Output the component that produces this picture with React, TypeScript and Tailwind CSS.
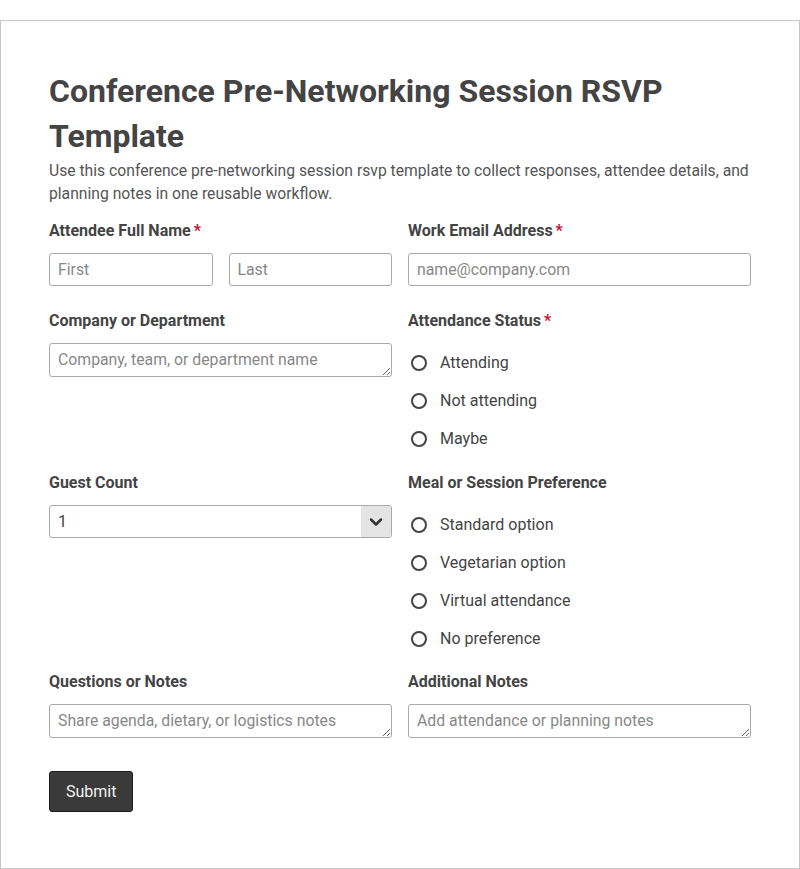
import { ChevronDown } from 'lucide-react';

const Label = ({ text, required }: { text: string; required?: boolean }) => (
    <div className="text-[16px] leading-[22px] font-bold text-[#444] mb-[11px]">
        {text}
        {required && <span className="text-[#c8102e] ml-[3px]">*</span>}
    </div>
);

const inputCls =
    'w-full h-[33px] border border-[#aaa] rounded-[3px] px-[8px] text-[15.8px] text-[#444] placeholder:text-[#888] bg-white outline-none';

const textareaCls =
    'block w-full h-[34px] border border-[#aaa] rounded-[3px] px-[8px] py-[5px] text-[15.8px] leading-[22px] text-[#444] placeholder:text-[#888] bg-white outline-none resize-y';

const RadioGroup = ({ name, options }: { name: string; options: string[] }) => (
    <div className="flex flex-col gap-[14px] pt-[8px]">
        {options.map((opt) => (
            <label key={opt} className="flex items-center h-[24px] text-[16px] text-[#444]">
                <input type="radio" name={name} className="appearance-none w-[16px] h-[16px] rounded-full border-2 border-[#444] ml-[3px] mr-[13px] shrink-0" />
                {opt}
            </label>
        ))}
    </div>
);

const App = () => {
    return (
        <div className="bg-white min-h-[869px] pt-[20px]" style={{ fontFamily: 'Roboto, "Noto Sans", sans-serif' }}>
            <div className="border border-[#c8c8c8] px-[48px] pt-[48px] pb-[56px]">
                <h1 className="text-[32px] leading-[45px] font-bold text-[#444]">
                    Conference Pre-Networking Session RSVP Template
                </h1>
                <p className="text-[15.7px] leading-[23px] text-[#555] mb-[15px]">
                    Use this conference pre-networking session rsvp template to collect responses, attendee details, and planning notes in one reusable workflow.
                </p>

                <div className="grid grid-cols-2 gap-x-4 mb-[24px]">
                    <div>
                        <Label text="Attendee Full Name" required />
                        <div className="grid grid-cols-2 gap-4">
                            <input className={inputCls} placeholder="First" />
                            <input className={inputCls} placeholder="Last" />
                        </div>
                    </div>
                    <div>
                        <Label text="Work Email Address" required />
                        <input className={inputCls} placeholder="name@company.com" />
                    </div>
                </div>

                <div className="grid grid-cols-2 gap-x-4 mb-[21px]">
                    <div>
                        <Label text="Company or Department" />
                        <textarea className={textareaCls} placeholder="Company, team, or department name" />
                    </div>
                    <div>
                        <Label text="Attendance Status" required />
                        <RadioGroup name="status" options={['Attending', 'Not attending', 'Maybe']} />
                    </div>
                </div>

                <div className="grid grid-cols-2 gap-x-4 mb-[20px]">
                    <div>
                        <Label text="Guest Count" />
                        <div className="flex h-[33px] border border-[#aaa] rounded-[3px] overflow-hidden">
                            <div className="flex-1 flex items-center px-[8px] text-[16px] text-[#444]">1</div>
                            <div className="w-[30px] bg-[#e4e4e4] flex items-center justify-center text-[#333]">
                                <ChevronDown size={20} strokeWidth={3} />
                            </div>
                        </div>
                    </div>
                    <div>
                        <Label text="Meal or Session Preference" />
                        <RadioGroup
                            name="meal"
                            options={['Standard option', 'Vegetarian option', 'Virtual attendance', 'No preference']}
                        />
                    </div>
                </div>

                <div className="grid grid-cols-2 gap-x-4 mb-[33px]">
                    <div>
                        <Label text="Questions or Notes" />
                        <textarea className={textareaCls} placeholder="Share agenda, dietary, or logistics notes" />
                    </div>
                    <div>
                        <Label text="Additional Notes" />
                        <textarea className={textareaCls} placeholder="Add attendance or planning notes" />
                    </div>
                </div>

                <button className="h-[41px] px-[16px] bg-[#3a3a3a] border border-[#1c1c1c] rounded-[3px] text-[16px] text-[#f2f2f2]">
                    Submit
                </button>
            </div>
        </div>
    );
};

export default App;
